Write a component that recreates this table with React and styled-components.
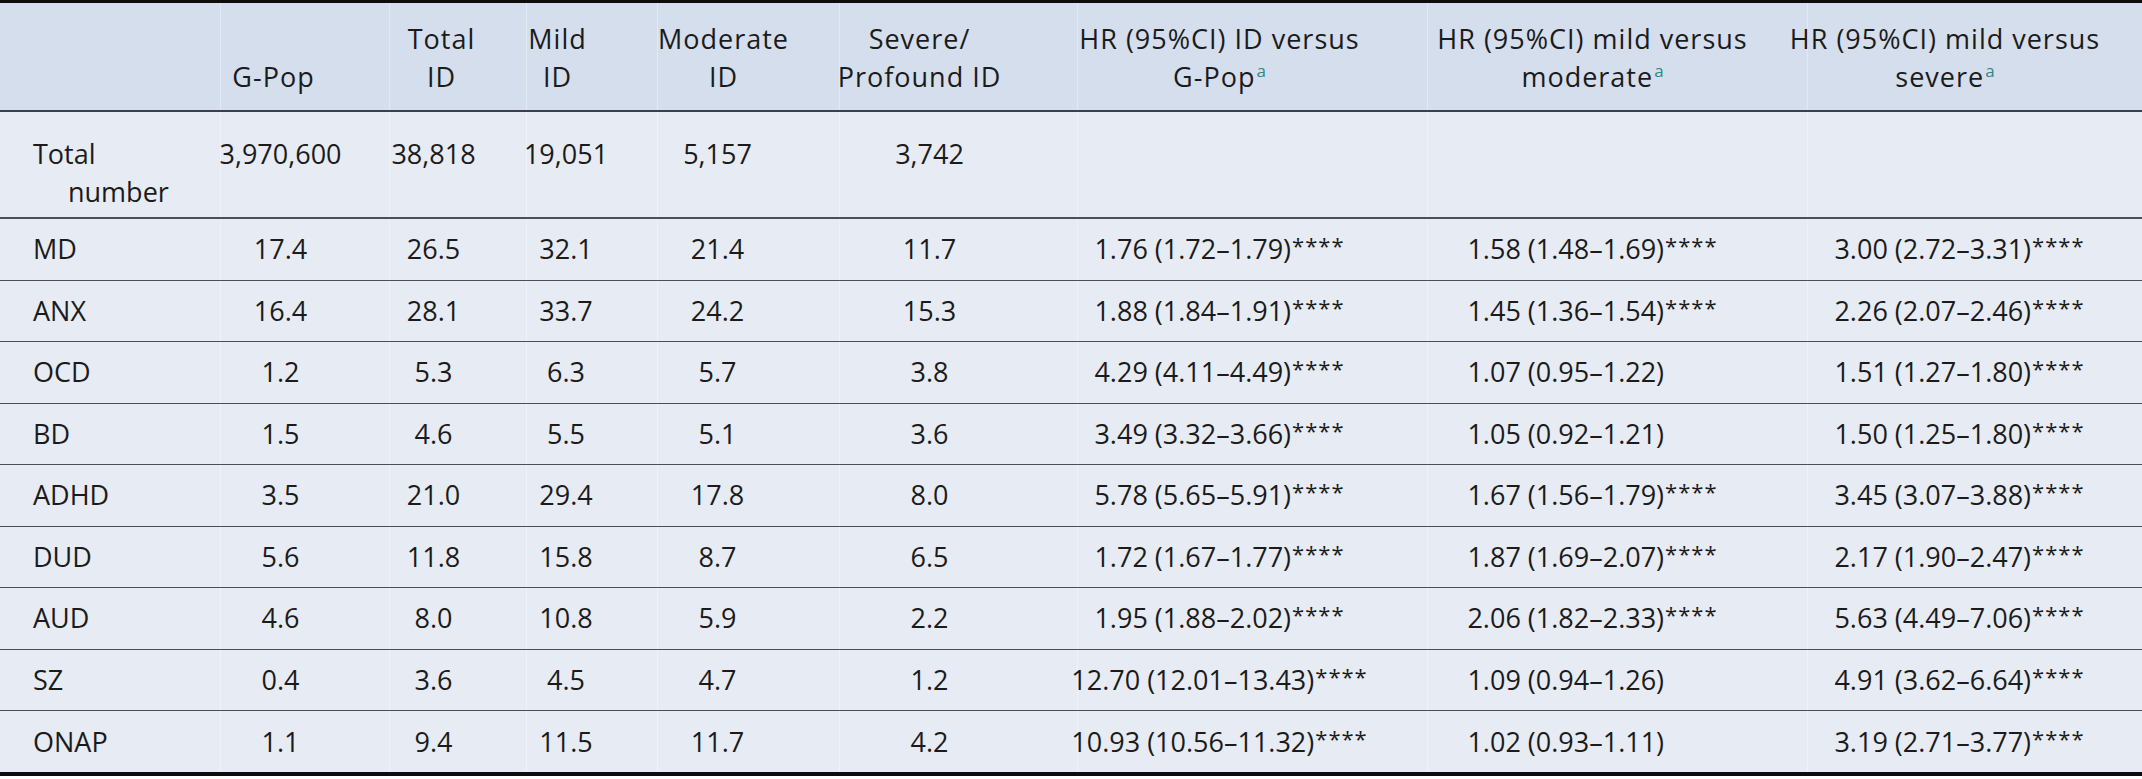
import React from 'react';
import styled, { createGlobalStyle } from 'styled-components';

const GlobalStyle = createGlobalStyle`
  body {
    margin: 0;
    background: #ffffff;
    font-family: "Open Sans", "Noto Sans", sans-serif;
    color: #1b1b1b;
  }
`;

const COLUMNS = '220px 169px 137px 131px 182px 238px 350px 380px 335px';

// right padding per column, used to pull the centred text off the cell middle
const HEAD_PAD = [63, 33, 69, 50, 78, 66, 50, 60];
const DATA_PAD = [49, 49, 52, 62, 58, 66, 50, 31];

const Table = styled.div`
  width: 2142px;
  border-top: 3px solid #0d0d0d;
  border-bottom: 4px solid #0d0d0d;
  font-size: 27px;
  line-height: 38px;
`;

const Row = styled.div`
  display: grid;
  grid-template-columns: ${COLUMNS};
  box-sizing: border-box;
  height: ${(p) => p.$height}px;
  background: ${(p) => (p.$head ? '#d4deec' : '#e7ebf3')};
  border-bottom: ${(p) => p.$line || 'none'};
`;

const Cell = styled.div`
  display: flex;
  justify-content: center;
  align-items: ${(p) => p.$align || 'center'};
  box-sizing: border-box;
  padding-right: ${(p) => p.$right || 0}px;
  padding-top: ${(p) => p.$top || 0}px;
  padding-bottom: ${(p) => p.$bottom || 0}px;
  border-left: 1px solid rgba(255, 255, 255, 0.35);
  white-space: nowrap;
  text-align: center;
  letter-spacing: ${(p) => (p.$wide ? '1px' : 'normal')};
  &:first-child {
    border-left: none;
  }
`;

const Label = styled(Cell)`
  justify-content: flex-start;
  padding-left: 33px;
  text-align: left;
`;

const HangingLabel = styled.div`
  padding-left: 35px;
  text-indent: -35px;
`;

const Note = styled.sup`
  font-size: 17px;
  line-height: 0;
  color: #2f8a84;
  margin-left: 1px;
  letter-spacing: 0;
`;

const Stars = styled.span`
  position: relative;
  top: -5px;
  font-size: 22px;
  line-height: 0;
  letter-spacing: 1px;
  margin-left: 1px;
  visibility: ${(p) => (p.$hidden ? 'hidden' : 'visible')};
`;

const headers = [
  ['G-Pop'],
  ['Total', 'ID'],
  ['Mild', 'ID'],
  ['Moderate', 'ID'],
  ['Severe/', 'Profound ID'],
  ['HR (95%CI) ID versus', 'G-Pop', true],
  ['HR (95%CI) mild versus', 'moderate', true],
  ['HR (95%CI) mild versus', 'severe', true],
];

const totals = ['3,970,600', '38,818', '19,051', '5,157', '3,742', '', '', ''];

const rows = [
  ['MD', '17.4', '26.5', '32.1', '21.4', '11.7', ['1.76 (1.72–1.79)', 1], ['1.58 (1.48–1.69)', 1], ['3.00 (2.72–3.31)', 1]],
  ['ANX', '16.4', '28.1', '33.7', '24.2', '15.3', ['1.88 (1.84–1.91)', 1], ['1.45 (1.36–1.54)', 1], ['2.26 (2.07–2.46)', 1]],
  ['OCD', '1.2', '5.3', '6.3', '5.7', '3.8', ['4.29 (4.11–4.49)', 1], ['1.07 (0.95–1.22)', 0], ['1.51 (1.27–1.80)', 1]],
  ['BD', '1.5', '4.6', '5.5', '5.1', '3.6', ['3.49 (3.32–3.66)', 1], ['1.05 (0.92–1.21)', 0], ['1.50 (1.25–1.80)', 1]],
  ['ADHD', '3.5', '21.0', '29.4', '17.8', '8.0', ['5.78 (5.65–5.91)', 1], ['1.67 (1.56–1.79)', 1], ['3.45 (3.07–3.88)', 1]],
  ['DUD', '5.6', '11.8', '15.8', '8.7', '6.5', ['1.72 (1.67–1.77)', 1], ['1.87 (1.69–2.07)', 1], ['2.17 (1.90–2.47)', 1]],
  ['AUD', '4.6', '8.0', '10.8', '5.9', '2.2', ['1.95 (1.88–2.02)', 1], ['2.06 (1.82–2.33)', 1], ['5.63 (4.49–7.06)', 1]],
  ['SZ', '0.4', '3.6', '4.5', '4.7', '1.2', ['12.70 (12.01–13.43)', 1], ['1.09 (0.94–1.26)', 0], ['4.91 (3.62–6.64)', 1]],
  ['ONAP', '1.1', '9.4', '11.5', '11.7', '4.2', ['10.93 (10.56–11.32)', 1], ['1.02 (0.93–1.11)', 0], ['3.19 (2.71–3.77)', 1]],
];

function HazardRatio({ value, starred }) {
  // non-significant values keep an invisible star run so they line up with the rest
  return (
    <span>
      {value}
      <Stars $hidden={!starred}>****</Stars>
    </span>
  );
}

export default function App() {
  return (
    <>
      <GlobalStyle />
      <Table>
        <Row $head $height={109} $line="2px solid #3b4049">
          <Label />
          {headers.map(([first, second, note], i) => (
            <Cell key={i} $wide $align="flex-end" $right={HEAD_PAD[i]} $bottom={14}>
              <div>
                {first}
                {second ? <br /> : null}
                {second}
                {note ? <Note>a</Note> : null}
              </div>
            </Cell>
          ))}
        </Row>
        <Row $height={107} $line="2px solid #4a4f58">
          <Label $align="flex-start" $top={23}>
            <HangingLabel>
              Total
              <br />
              number
            </HangingLabel>
          </Label>
          {totals.map((t, i) => (
            <Cell key={i} $align="flex-start" $top={23} $right={DATA_PAD[i]}>
              {t}
            </Cell>
          ))}
        </Row>
        {rows.map((r, idx) => {
          const last = idx === rows.length - 1;
          return (
            <Row key={r[0]} $height={last ? 61 : 61.5} $line={last ? 'none' : '1.5px solid #4a4f58'}>
              <Label>{r[0]}</Label>
              {r.slice(1, 6).map((v, i) => (
                <Cell key={i} $right={DATA_PAD[i]}>
                  {v}
                </Cell>
              ))}
              {r.slice(6).map(([v, s], i) => (
                <Cell key={`hr${i}`} $right={DATA_PAD[i + 5]}>
                  <HazardRatio value={v} starred={s} />
                </Cell>
              ))}
            </Row>
          );
        })}
      </Table>
    </>
  );
}
